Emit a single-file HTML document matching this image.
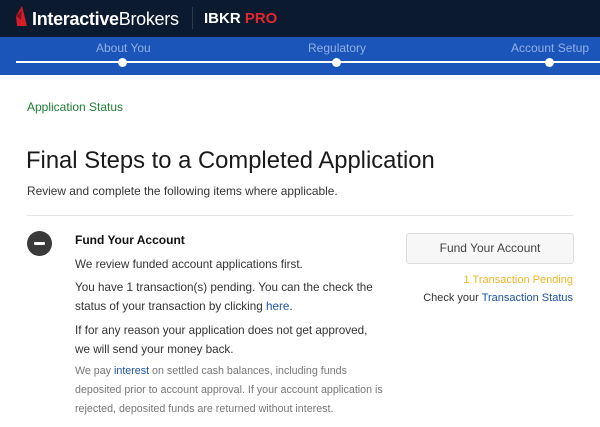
<!DOCTYPE html>
<html><head><meta charset="utf-8"><style>
*{margin:0;padding:0;box-sizing:border-box}
body{width:600px;height:427px;overflow:hidden;background:#fff;font-family:"Liberation Sans",sans-serif;color:#222;position:relative}
.hd{position:absolute;left:0;top:0;width:600px;height:37px;background:#0b1a2f}
.band{position:absolute;left:0;top:37px;width:600px;height:38px;background:#1b55b9}
.t{position:absolute;white-space:nowrap}
.lbl{color:#8fb0e6;font-size:12px;top:41px}
.dot{position:absolute;width:9px;height:9px;border-radius:50%;background:#fff;top:58px}
a{color:#1d52a6;text-decoration:none}
.b{font-size:11.7px;line-height:19px;color:#333}
</style></head><body>
<div class="hd"></div>
<svg class="t" style="left:14px;top:6px" width="14" height="22" viewBox="0 0 14 22"><path d="M8 0 L2 10 L3 20 L13 20 Z" fill="#d41f2a"/><path d="M2 10 L8 4 L7 14 Z" fill="#8a1018"/></svg>
<div class="t" style="left:32px;top:9px;color:#fff;font-size:18px;letter-spacing:-0.3px"><b>Interactive</b>Brokers</div>
<div class="t" style="left:192px;top:7px;width:1px;height:22px;background:#2a3a50"></div>
<div class="t" style="left:204px;top:10px;color:#fff;font-size:15px;font-weight:bold">IBKR <span style="color:#e0262f">PRO</span></div>
<div class="band"></div>
<div class="t lbl" style="left:96px">About You</div>
<div class="t lbl" style="left:308px">Regulatory</div>
<div class="t lbl" style="left:511px">Account Setup</div>
<div class="t" style="left:16px;top:61px;width:584px;height:2px;background:#fff"></div>
<div class="dot" style="left:118px"></div>
<div class="dot" style="left:332px"></div>
<div class="dot" style="left:545px"></div>
<div class="t" style="left:27px;top:100px;font-size:12px;color:#1e7e34">Application Status</div>
<div class="t" style="left:26px;top:147px;font-size:23.8px;color:#1a1a1a">Final Steps to a Completed Application</div>
<div class="t" style="left:27px;top:184px;font-size:11.9px;color:#333">Review and complete the following items where applicable.</div>
<div class="t" style="left:27px;top:215px;width:546px;height:1px;background:#e3e3e3"></div>
<div class="t" style="left:27px;top:231px;width:25px;height:25px;border-radius:50%;background:#3a3a3a"></div>
<div class="t" style="left:34px;top:242px;width:11px;height:3px;background:#fff;border-radius:1px"></div>
<div class="t" style="left:75px;top:233px;font-size:12px;font-weight:bold;color:#111">Fund Your Account</div>
<div class="t b" style="left:75px;top:255px">We review funded account applications first.</div>
<div class="t b" style="left:75px;top:278px">You have 1 transaction(s) pending. You can the check the<br>status of your transaction by clicking <a>here</a>.</div>
<div class="t b" style="left:75px;top:321px">If for any reason your application does not get approved,<br>we will send your money back.</div>
<div class="t" style="left:75px;top:362px;font-size:10.7px;line-height:19px;color:#777">We pay <a>interest</a> on settled cash balances, including funds<br>deposited prior to account approval. If your account application is<br>rejected, deposited funds are returned without interest.</div>
<div class="t" style="left:406px;top:233px;width:168px;height:31px;border:1px solid #ddd;border-radius:3px;background:#f7f7f7;text-align:center;line-height:29px;font-size:12px;color:#444">Fund Your Account</div>
<div class="t" style="right:27px;top:274px;font-size:11px;color:#f0b429">1 Transaction Pending</div>
<div class="t" style="right:27px;top:292px;font-size:11px;color:#333">Check your <a>Transaction Status</a></div>
</body></html>
